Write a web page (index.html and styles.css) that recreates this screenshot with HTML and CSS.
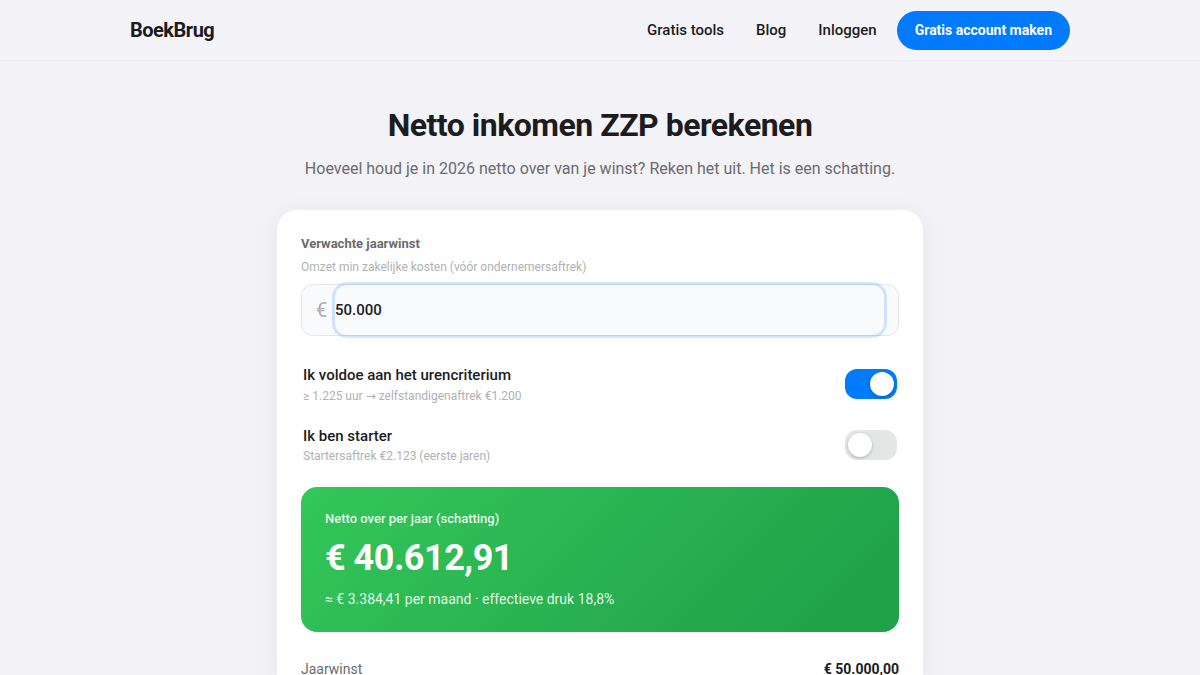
FILE: index.html
```
<!DOCTYPE html>
<html lang="nl">
<head>
    <meta charset="UTF-8">
    <meta name="viewport" content="width=device-width, initial-scale=1.0">
    <title>Netto inkomen ZZP berekenen</title>
    <link rel="stylesheet" href="styles.css">
</head>
<body>
    <header class="header">
        <div class="header-inner">
            <a class="logo" href="#">BoekBrug</a>
            <nav class="nav">
                <a href="#">Gratis tools</a>
                <a href="#">Blog</a>
                <a href="#">Inloggen</a>
                <a class="nav-button" href="#">Gratis account maken</a>
            </nav>
        </div>
    </header>

    <main class="container">
        <h1>Netto inkomen ZZP berekenen</h1>
        <p class="intro">Hoeveel houd je in 2026 netto over van je winst? Reken het uit. Het is een schatting.</p>

        <div class="card">
            <label class="label" for="winst">Verwachte jaarwinst</label>
            <p class="hint">Omzet min zakelijke kosten (vóór ondernemersaftrek)</p>
            <div class="money">
                <span class="euro">€</span>
                <input type="text" id="winst" class="money-input" value="50.000">
            </div>

            <div class="option">
                <div>
                    <div class="option-title">Ik voldoe aan het urencriterium</div>
                    <div class="option-hint option-hint-hours">≥ 1.225 uur → zelfstandigenaftrek €1.200</div>
                </div>
                <button class="toggle toggle-on" type="button"><span class="knob"></span></button>
            </div>
            <div class="option">
                <div>
                    <div class="option-title">Ik ben starter</div>
                    <div class="option-hint">Startersaftrek €2.123 (eerste jaren)</div>
                </div>
                <button class="toggle" type="button"><span class="knob"></span></button>
            </div>

            <div class="result">
                <div class="result-label">Netto over per jaar (schatting)</div>
                <div class="result-amount">€ 40.612,91</div>
                <div class="result-sub">≈ € 3.384,41 per maand · effectieve druk 18,8%</div>
            </div>

            <div class="row">
                <span>Jaarwinst</span>
                <strong>€ 50.000,00</strong>
            </div>
        </div>
    </main>
</body>
</html>
```
FILE: styles.css
```
* {
    box-sizing: border-box;
}
body {
    display: flex;
    flex-direction: column;
    margin: 0;
    height: 100vh;
    overflow: hidden;
    font-family: Roboto, "DejaVu Sans", sans-serif;
    background: #f2f2f7;
    color: #1c1c1e;
}
a {
    color: inherit;
    text-decoration: none;
}
.header {
    flex: none;
    height: 61px;
    background: #f4f3f8;
    border-bottom: 1px solid #e8e8ed;
}
.header-inner {
    display: flex;
    align-items: center;
    justify-content: space-between;
    width: 940px;
    height: 60px;
    margin: 0 auto;
}
.logo {
    font-size: 20px;
    font-weight: 700;
    letter-spacing: -0.5px;
}
.nav {
    display: flex;
    align-items: center;
    gap: 32px;
    font-size: 15px;
    font-weight: 500;
}
.nav .nav-button {
    margin-left: -12px;
    padding: 0 18px;
    line-height: 39px;
    border-radius: 20px;
    background: #007aff;
    color: #fff;
    font-size: 14px;
    font-weight: 700;
}
.container {
    display: flex;
    flex-direction: column;
    flex: 1;
    min-height: 0;
    width: 646px;
    margin: 0 auto;
    padding-top: 44px;
}
h1 {
    margin: 0;
    font-size: 32px;
    line-height: 40px;
    font-weight: 700;
    letter-spacing: -0.5px;
    text-align: center;
}
.intro {
    margin: 12px 0 29px;
    font-size: 16px;
    line-height: 24px;
    color: #6b6b6e;
    text-align: center;
}
.card {
    flex: 1;
    min-height: 0;
    padding: 24px 24px 0;
    border-radius: 20px 20px 0 0;
    background: #fff;
    box-shadow: 0 4px 24px rgba(0, 0, 0, 0.06);
}
.label {
    display: block;
    font-size: 13px;
    line-height: 20px;
    font-weight: 700;
    color: #6b6b6e;
}
.hint {
    margin: 4px 0 8px;
    font-size: 12px;
    line-height: 18px;
    color: #aeb2b2;
}
.money {
    display: flex;
    align-items: center;
    height: 52px;
    padding: 0 14px;
    border: 1px solid #e5e5ea;
    border-radius: 12px;
    background: #f9fafb;
}
.euro {
    width: 19px;
    font-size: 20px;
    color: #aeaeb2;
}
.money-input {
    flex: 1;
    height: 50px;
    padding: 0;
    border: none;
    border-radius: 12px;
    outline: none;
    background: transparent;
    box-shadow: 0 0 0 3px rgba(0, 122, 255, 0.18);
    color: #1c1c1e;
    font-family: inherit;
    font-size: 15px;
    font-weight: 500;
}
.option {
    display: flex;
    align-items: center;
    justify-content: space-between;
    height: 61px;
    padding: 0 2px;
}
.money + .option {
    margin-top: 17px;
}
.option-title {
    font-size: 15px;
    line-height: 22px;
    font-weight: 500;
}
.option-hint {
    font-size: 12px;
    line-height: 18px;
    color: #aeb2b2;
}
.option-hint-hours {
    padding-top: 1px;
    margin-bottom: -1px;
}
.toggle {
    display: flex;
    width: 52px;
    height: 30px;
    padding: 3px;
    border: none;
    border-radius: 12px;
    background: #e4e6e6;
}
.toggle-on {
    justify-content: flex-end;
    background: #007aff;
}
.knob {
    width: 24px;
    height: 24px;
    border-radius: 50%;
    background: #fff;
    box-shadow: 0 1px 3px rgba(0, 0, 0, 0.25);
}
.result {
    height: 145px;
    margin-top: 12px;
    padding: 22px 24px;
    border-radius: 16px;
    background: linear-gradient(135deg, #34c759, #20a24a 90%);
    color: #fff;
}
.result-label {
    font-size: 13px;
    line-height: 20px;
    font-weight: 500;
    color: rgba(255, 255, 255, 0.9);
}
.result-amount {
    margin: 7px 0 9px;
    font-size: 36px;
    line-height: 44px;
    font-weight: 700;
    letter-spacing: -0.5px;
}
.result-sub {
    font-size: 14px;
    line-height: 20px;
    color: rgba(255, 255, 255, 0.9);
}
.row {
    display: flex;
    justify-content: space-between;
    margin-top: 29px;
    font-size: 14px;
    line-height: 16px;
    color: #6b6b6e;
}
.row strong {
    color: #1c1c1e;
    font-weight: 700;
}
```
